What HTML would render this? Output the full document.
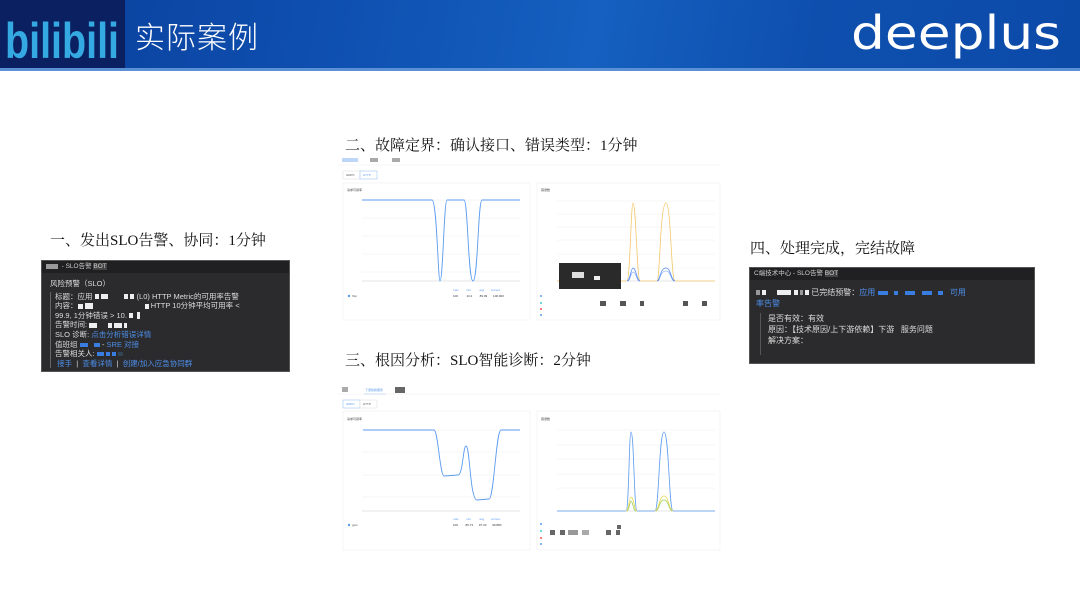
<!DOCTYPE html>
<html><head><meta charset="utf-8"><style>
*{margin:0;padding:0;box-sizing:border-box}
body{width:1080px;height:608px;background:#fff;position:relative;overflow:hidden;font-family:"Liberation Sans","Noto Sans CJK SC",sans-serif}
.hdr{position:absolute;left:0;top:0;width:1080px;height:69px;background:linear-gradient(100deg,#0b3f9a 0%,#0e4fb0 30%,#1560c0 55%,#0e4fae 75%,#0c4aa8 100%)}
.navy{position:absolute;left:0;top:0;width:125px;height:68px;background:#0a2060}
.line{position:absolute;left:0;top:68px;width:1080px;height:3px;background:#5b8fd6}
.t{position:absolute;font-family:"Liberation Serif","Noto Serif CJK SC",serif;font-size:15px;color:#111;white-space:nowrap}
.box{position:absolute;background:#2b2b2d;color:#ddd;font-size:7.5px;font-family:"Liberation Sans","Noto Sans CJK SC",sans-serif;border:1px solid #555}
.box .top{height:12px;background:#202022;padding-left:4px;line-height:12px;color:#ccc;font-size:6.5px}
.box p{white-space:nowrap;line-height:9.6px}
.bl{color:#4d8ee8}
.w{display:inline-block;background:#eee;height:5px;vertical-align:middle}
.b{display:inline-block;background:#3a7de0;height:4px;vertical-align:middle}
</style></head><body>
<div class="hdr"></div>
<div class="navy"></div>
<div class="line"></div>
<svg style="position:absolute;left:0;top:0" width="130" height="68">
<text x="5" y="58" font-family="Liberation Sans" font-weight="bold" font-size="50" fill="#35a9e1" textLength="114" lengthAdjust="spacingAndGlyphs">bilibili</text>
</svg>
<div style="position:absolute;left:135px;top:13px;font-family:'Noto Sans CJK SC',sans-serif;font-weight:300;font-size:30px;color:#fff;letter-spacing:1px">实际案例</div>
<svg style="position:absolute;left:845px;top:0" width="230" height="68">
<text x="6" y="49" font-family="DejaVu Sans" font-size="46" fill="#fff" textLength="210" lengthAdjust="spacingAndGlyphs">deeplus</text>
</svg>

<div class="t" style="left:50px;top:229px">一、发出SLO告警、协同：1分钟</div>
<div class="t" style="left:345px;top:134px">二、故障定界：确认接口、错误类型：1分钟</div>
<div class="t" style="left:345px;top:349px">三、根因分析：SLO智能诊断：2分钟</div>
<div class="t" style="left:750px;top:237px">四、处理完成，完结故障</div>

<div class="box" style="left:41px;top:260px;width:249px;height:112px">
<div class="top"><span class="w" style="width:12px;background:#999"></span> &nbsp;- SLO告警 <span style="background:#444">BOT</span></div>
<div style="padding:6px 0 0 8px">
<p>风险预警（SLO）</p>
<div style="border-left:1px solid #666;margin-top:3px;padding-left:4px">
<p>标题：应用 <span class="w" style="width:4px"></span> <span class="w" style="width:7px"></span> &nbsp; &nbsp; &nbsp; &nbsp;<span class="w" style="width:4px"></span> <span class="w" style="width:4px"></span> (L0) HTTP Metric的可用率告警</p>
<p>内容：<span class="w" style="width:5px"></span> <span class="w" style="width:8px;height:6px"></span> &nbsp; &nbsp; &nbsp; &nbsp; &nbsp; &nbsp; &nbsp; &nbsp; &nbsp; &nbsp; &nbsp; &nbsp; <span class="w" style="width:4px"></span> HTTP 10分钟平均可用率 &lt;</p>
<p>99.9, 1分钟错误 &gt; 10. <span class="w" style="width:4px"></span> &nbsp;<span class="w" style="width:3px;height:7px"></span></p>
<p>告警时间: <span class="w" style="width:8px"></span> &nbsp; &nbsp; <span class="w" style="width:4px"></span> <span class="w" style="width:8px"></span> <span class="w" style="width:3px"></span></p>
<p>SLO 诊断: <span class="bl">点击分析错误详情</span></p>
<p>值班组 <span class="b" style="width:8px"></span> &nbsp; <span class="b" style="width:6px"></span> - <span class="bl">SRE 对接</span></p>
<p>告警相关人: <span class="b" style="width:7px"></span> <span class="b" style="width:4px"></span> <span class="b" style="width:4px"></span> <span class="b" style="width:5px;background:#345"></span></p>
<p>&nbsp;<span class="bl">接手</span> &nbsp;| &nbsp;<span class="bl">查看详情</span> &nbsp;| &nbsp;<span class="bl">创建/加入应急协同群</span></p>
</div></div></div>

<div class="box" style="left:749px;top:267px;width:286px;height:97px">
<div class="top">C端技术中心 - SLO告警 <span style="background:#444">BOT</span></div>
<div style="padding:7px 0 0 6px;font-size:8px">
<p style="line-height:11px"><span class="w" style="width:4px;background:#999"></span> <span class="w" style="width:4px"></span> &nbsp; &nbsp; <span class="w" style="width:14px"></span> <span class="w" style="width:4px"></span> <span class="w" style="width:3px;background:#999"></span> <span class="w" style="width:4px"></span> 已完结预警：<span class="bl">应用</span> <span class="b" style="width:10px"></span> &nbsp; <span class="b" style="width:4px"></span> &nbsp; <span class="b" style="width:10px"></span> &nbsp; <span class="b" style="width:10px"></span> &nbsp; <span class="b" style="width:5px"></span> &nbsp; <span class="bl">可用</span></p>
<p class="bl" style="line-height:11px">率告警</p>
<div style="border-left:1px solid #555;margin:4px 0 0 4px;padding-left:7px;height:42px">
<p style="line-height:11px">是否有效：有效</p>
<p style="line-height:11px">原因：【技术原因/上下游依赖】下游 &nbsp; 服务问题</p>
<p style="line-height:11px">解决方案：</p>
</div></div></div>

<svg style="position:absolute;left:0;top:0" width="1080" height="608" font-family="Liberation Sans" font-size="3">
<rect x="342" y="158" width="16" height="4" fill="#bcd6f7"/><rect x="370" y="158" width="8" height="4" fill="#aaa"/><rect x="392" y="158" width="8" height="4" fill="#aaa"/>
<line x1="338" y1="165" x2="720" y2="165" stroke="#eee" stroke-width="0.5"/>
<rect x="343" y="171" width="17" height="8" fill="#fff" stroke="#ddd" stroke-width="0.5"/><rect x="360" y="171" width="17" height="8" fill="#fff" stroke="#8bb8f0" stroke-width="0.5"/>
<text x="346" y="176" fill="#555">GRPC</text><text x="363" y="176" fill="#5b9bf0">HTTP</text>
<rect x="343" y="183" width="187" height="137" fill="#fff" stroke="#eee" stroke-width="0.6"/>
<rect x="537" y="183" width="183" height="137" fill="#fff" stroke="#eee" stroke-width="0.6"/>
<g stroke="#eee" stroke-width="0.5"><line x1="362" y1="200" x2="520" y2="200"/><line x1="362" y1="218" x2="520" y2="218"/><line x1="362" y1="236" x2="520" y2="236"/><line x1="362" y1="254" x2="520" y2="254"/><line x1="362" y1="272" x2="520" y2="272"/>
<line x1="557" y1="201" x2="715" y2="201"/><line x1="557" y1="214" x2="715" y2="214"/><line x1="557" y1="227" x2="715" y2="227"/><line x1="557" y1="240" x2="715" y2="240"/><line x1="557" y1="254" x2="715" y2="254"/><line x1="557" y1="268" x2="715" y2="268"/></g>
<line x1="362" y1="281" x2="520" y2="281" stroke="#ccc" stroke-width="0.5"/><line x1="557" y1="281" x2="715" y2="281" stroke="#ccc" stroke-width="0.5"/>
<path d="M362 200 L432 200 C437 200 438 281 440 281 C443 281 444 200 447 200 L464 200 C468 200 468 281 473 281 C478 281 478 200 482 200 L520 200" fill="none" stroke="#5b9bf0" stroke-width="0.9"/>
<path d="M557 281 L627 281 C630 281 631 203 633 203 C636 203 637 281 640 281 L657 281 C660 281 660 203 666 203 C671 203 671 281 675 281 L715 281" fill="none" stroke="#f2c86a" stroke-width="0.8"/>
<path d="M627 281 C630 281 631 268 633 268 C636 268 637 281 640 281 M657 281 C660 281 660 268 666 268 C671 268 671 281 675 281" fill="none" stroke="#5b8ef0" stroke-width="0.8"/>
<path d="M628 281 C630 281 631 272 633 272 C636 272 637 281 639 281 M658 281 C660 281 660 271 666 271 C671 271 671 281 674 281" fill="none" stroke="#6f9af5" stroke-width="0.6"/>
<rect x="559" y="263" width="62" height="26" fill="#2a2a2a"/>
<rect x="572" y="272" width="12" height="6" fill="#ddd"/><rect x="594" y="276" width="6" height="4" fill="#eee"/>
<text x="347" y="191" fill="#444">请求可用率</text><text x="541" y="191" fill="#444">错误数</text>
<circle cx="349" cy="296" r="1.2" fill="#5b9bf0"/><text x="352" y="297" fill="#555">http</text>
<text x="453" y="297" fill="#333">100 &#160;&#160;&#160;&#160;&#160;&#160;&#160;&#160;&#160;13.4 &#160;&#160;&#160;&#160;&#160;&#160;&#160;&#160;89.09 &#160;&#160;&#160;&#160;&#160;&#160;100.000</text>
<text x="453" y="291" fill="#5b9bf0">max &#160;&#160;&#160;&#160;&#160;&#160;&#160;&#160;min &#160;&#160;&#160;&#160;&#160;&#160;&#160;&#160;&#160;avg &#160;&#160;&#160;&#160;&#160;&#160;&#160;current</text>
<g fill="#555"><rect x="600" y="301" width="6" height="5"/><rect x="620" y="301" width="6" height="5"/><rect x="640" y="301" width="4" height="5"/><rect x="683" y="301" width="5" height="5"/><rect x="702" y="301" width="5" height="5"/></g>
<circle cx="541" cy="296" r="1" fill="#5b9bf0"/><circle cx="541" cy="303" r="1" fill="#4cc"/><circle cx="541" cy="309" r="1" fill="#e55"/><circle cx="541" cy="315" r="1" fill="#5b9bf0"/>
<rect x="342" y="387" width="6" height="5" fill="#aaa"/><text x="365" y="391" fill="#5b9bf0">下游依赖服务</text><line x1="364" y1="394" x2="386" y2="394" stroke="#5b9bf0" stroke-width="0.6"/><rect x="395" y="387" width="10" height="6" fill="#666"/>
<line x1="338" y1="394" x2="720" y2="394" stroke="#eee" stroke-width="0.5"/>
<rect x="343" y="400" width="17" height="8" fill="#fff" stroke="#8bb8f0" stroke-width="0.5"/><rect x="360" y="400" width="17" height="8" fill="#fff" stroke="#ddd" stroke-width="0.5"/>
<text x="346" y="405" fill="#5b9bf0">GRPC</text><text x="363" y="405" fill="#555">HTTP</text>
<rect x="343" y="411" width="187" height="139" fill="#fff" stroke="#eee" stroke-width="0.6"/>
<rect x="537" y="411" width="183" height="139" fill="#fff" stroke="#eee" stroke-width="0.6"/>
<g stroke="#eee" stroke-width="0.5"><line x1="362" y1="430" x2="520" y2="430"/><line x1="362" y1="452" x2="520" y2="452"/><line x1="362" y1="475" x2="520" y2="475"/><line x1="362" y1="497" x2="520" y2="497"/>
<line x1="557" y1="430" x2="715" y2="430"/><line x1="557" y1="445" x2="715" y2="445"/><line x1="557" y1="459" x2="715" y2="459"/><line x1="557" y1="474" x2="715" y2="474"/><line x1="557" y1="488" x2="715" y2="488"/></g>
<line x1="362" y1="511" x2="520" y2="511" stroke="#ccc" stroke-width="0.5"/><line x1="557" y1="511" x2="715" y2="511" stroke="#ccc" stroke-width="0.5"/>
<path d="M363 430 L434 430 C438 430 440 476 444 476 L458 475 C463 475 463 446 466 446 C470 446 470 500 477 500 L489 499 C494 499 496 430 501 430 L520 430" fill="none" stroke="#5b9bf0" stroke-width="0.9"/>
<path d="M557 511 L626 511 C629 511 629 432 631 432 C634 432 634 511 637 511 L655 511 C659 511 659 432 664 432 C669 432 669 511 673 511 L715 511" fill="none" stroke="#5b9bf0" stroke-width="0.8"/>
<path d="M626 511 C629 511 629 497 631 497 C634 497 634 511 637 511 M655 511 C659 511 659 496 664 496 C669 496 669 511 673 511" fill="none" stroke="#e7d95a" stroke-width="0.8"/>
<path d="M627 511 C629 511 630 501 631 501 C633 501 633 511 636 511 M656 511 C659 511 659 500 664 500 C669 500 669 511 672 511" fill="none" stroke="#9acb4a" stroke-width="0.7"/>
<text x="347" y="420" fill="#444">请求可用率</text><text x="541" y="420" fill="#444">错误数</text>
<circle cx="349" cy="525" r="1.2" fill="#5b9bf0"/><text x="352" y="526" fill="#555">grpc</text>
<text x="453" y="520" fill="#5b9bf0">max &#160;&#160;&#160;&#160;&#160;&#160;&#160;&#160;min &#160;&#160;&#160;&#160;&#160;&#160;&#160;&#160;&#160;avg &#160;&#160;&#160;&#160;&#160;&#160;&#160;current</text>
<text x="453" y="526" fill="#333">100 &#160;&#160;&#160;&#160;&#160;&#160;&#160;&#160;86.73 &#160;&#160;&#160;&#160;&#160;&#160;97.33 &#160;&#160;&#160;&#160;&#160;&#160;99.880</text>
<g fill="#666"><rect x="550" y="530" width="5" height="5"/><rect x="560" y="530" width="5" height="5"/><rect x="568" y="530" width="10" height="5" fill="#999"/><rect x="582" y="530" width="7" height="5" fill="#aaa"/><rect x="606" y="530" width="5" height="5"/><rect x="616" y="530" width="4" height="5"/><rect x="617" y="525" width="4" height="4"/></g>
<circle cx="541" cy="524" r="1" fill="#5b9bf0"/><circle cx="541" cy="531" r="1" fill="#4cc"/><circle cx="541" cy="538" r="1" fill="#e55"/><circle cx="541" cy="544" r="1" fill="#5b9bf0"/>
</svg>
</body></html>
